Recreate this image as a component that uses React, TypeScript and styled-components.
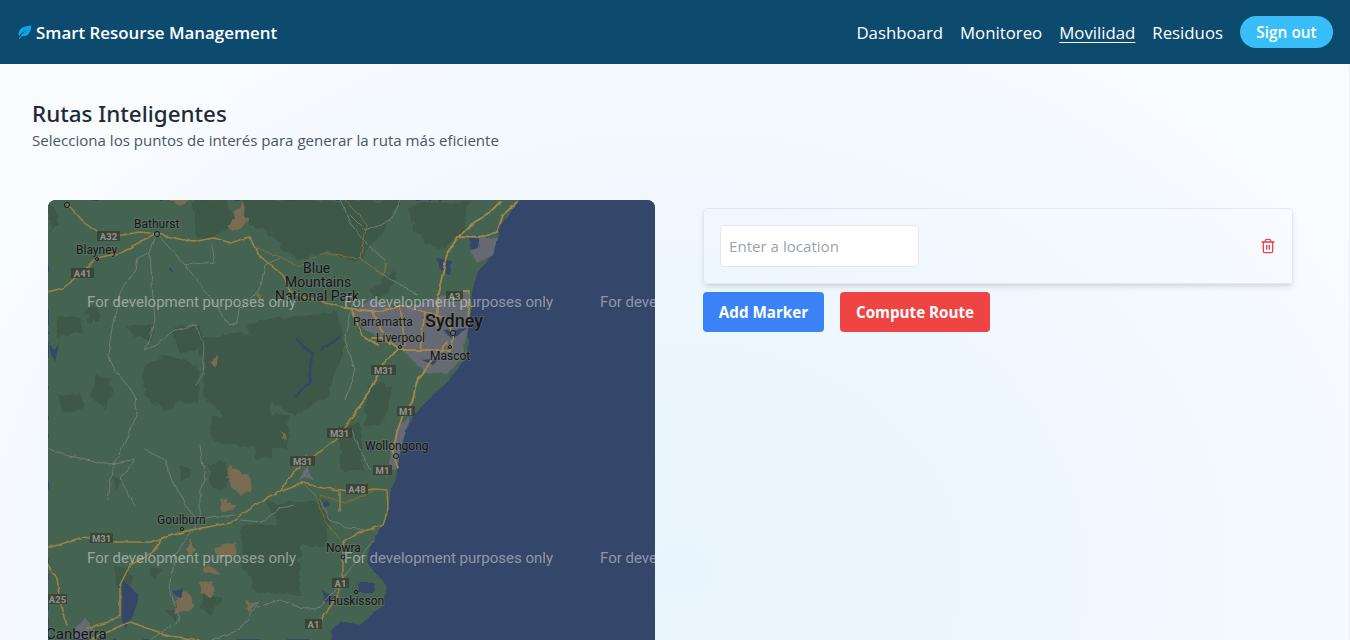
import React from "react";
import styled, { createGlobalStyle } from "styled-components";
import { Trash2 } from "lucide-react";

const Global = createGlobalStyle`
  html, body { margin: 0; padding: 0; height: 100%; overflow: hidden; }
  body { font-family: "Open Sans", "Noto Sans", sans-serif; }
`;

const Page = styled.div`
  height: 640px;
  overflow: hidden;
  background: radial-gradient(ellipse 800px 640px at 680px 570px, #e9f5fe 0%, #f0f7fe 55%, #f9fcff 100%);
`;
const Header = styled.header`
  height: 64px;
  background: #0c4a6e;
  display: flex;
  align-items: center;
  justify-content: space-between;
  padding: 0 17px 0 18px;
`;
const Brand = styled.div`
  display: flex;
  align-items: center;
  gap: 4px;
  color: #fff;
  font-size: 16.9px;
  font-weight: 600;
`;
const LeafIcon = styled.svg`
  width: 14px;
  height: 14px;
  fill: #0ea5e9;
  display: block;
`;
const Nav = styled.nav`
  display: flex;
  align-items: center;
  gap: 17px;
`;
const NavLink = styled.a<{ $active?: boolean }>`
  color: #fff;
  font-size: 16.8px;
  text-decoration: ${(p) => (p.$active ? "underline" : "none")};
  text-underline-offset: 3px;
`;
const SignOut = styled.button`
  height: 32px;
  width: 93px;
  border: 0;
  border-radius: 16px;
  background: #38bdf8;
  color: #fff;
  font: 600 15.4px "Open Sans", sans-serif;
`;
const Body = styled.div`
  height: 576px;
  box-sizing: border-box;
  border-right: 1px solid #eef1f5;
`;
const Intro = styled.section`
  padding: 34px 32px 0;
  height: 136px;
  box-sizing: border-box;
`;
const Title = styled.h1`
  margin: 0;
  font-family: "Noto Sans", sans-serif;
  font-size: 22.4px;
  line-height: 32px;
  font-weight: 500;
  color: #1f2937;
`;
const Subtitle = styled.p`
  margin: 0;
  font-size: 15.09px;
  line-height: 20px;
  color: #4b5563;
`;
const Content = styled.main`
  display: grid;
  grid-template-columns: 607px 590px;
  column-gap: 48px;
  padding: 0 48px;
`;
const MapFrame = styled.div`
  height: 460px;
  border-radius: 8px;
  overflow: hidden;
  background: #344669;
  svg { display: block; }
`;
const Side = styled.div`
  padding-top: 8px;
`;
const Card = styled.div`
  height: 76px;
  box-sizing: border-box;
  border: 1px solid #e5e7eb;
  border-radius: 4px;
  box-shadow: 0 4px 6px -1px rgba(0, 0, 0, 0.1), 0 2px 4px -2px rgba(0, 0, 0, 0.1);
  padding: 0 16px;
  display: flex;
  align-items: center;
  justify-content: space-between;
  svg { color: #ef4444; display: block; }
`;
const LocationInput = styled.input`
  width: 199px;
  height: 42px;
  box-sizing: border-box;
  border: 1px solid #e5e7eb;
  border-radius: 4px;
  background: #fff;
  padding: 0 8px;
  font: 400 15.1px "Open Sans", sans-serif;
  &::placeholder { color: #9ca3af; opacity: 1; }
`;
const Actions = styled.div`
  display: flex;
  gap: 16px;
  margin-top: 8px;
`;
const Action = styled.button<{ $bg: string; $w: number }>`
  height: 40px;
  width: ${(p) => p.$w}px;
  border: 0;
  border-radius: 4px;
  background: ${(p) => p.$bg};
  color: #fff;
  font: 700 15.2px "Open Sans", sans-serif;
`;

const land = "48,200 520,200 503,222 497,238 493,255 477,273 473,292 472,308 467,328 468,342 467,358 447,382 417,412 415,415 400,438 398,468 390,495 388,515 373,542 367,562 387,585 383,605 360,625 340,622 332,640 48,640";
const forest = [
  "190,200 227,200 232,225 215,238 195,235", "240,200 400,200 385,230 357,262 325,250 298,262 275,240 250,225",
  "55,318 80,316 82,335 60,338", "127,325 153,325 153,338 130,338", "85,312 98,308 100,322 88,322",
  "143,362 175,355 200,372 198,402 165,408 145,395", "170,330 200,325 205,350 180,352",
  "200,338 250,335 273,370 270,415 225,418 205,395", "250,322 338,312 345,345 330,395 295,415 255,395",
  "407,205 470,200 462,232 440,250 415,235", "370,290 395,268 392,285 375,300",
  "207,415 290,415 288,448 240,448 212,440", "210,462 227,462 227,488 210,488", "253,445 273,445 273,458 253,458",
  "240,528 300,520 300,595 262,595 243,570", "267,502 327,502 327,548 285,548", "340,425 362,425 362,470 338,470",
  "112,475 122,478 118,490", "180,465 192,470 180,480", "118,565 135,575 125,590 112,582",
  "205,590 222,600 212,615 200,610", "148,565 162,570 155,582", "165,612 178,610 176,622",
  "48,205 60,215 50,235", "365,385 392,385 385,420 365,425",
  "60,395 80,390 82,410 62,412", "95,370 112,380 105,410 92,395",
];
const tan = [
  "230,465 247,478 250,488 243,497 230,488 227,475", "222,498 235,502 230,510 223,510", "187,538 197,550 190,558",
  "217,550 233,542 232,556 220,558", "204,566 220,570 213,575 207,572", "200,582 215,587 212,597 202,595",
  "173,602 190,590 194,605 177,615", "243,600 258,606 248,612", "278,433 287,442 280,440",
  "227,225 240,202 250,222 233,232", "260,292 264,298 257,296", "210,360 220,358 216,368", "170,200 190,200 183,208",
];
const urban = [
  "353,312 370,300 400,308 440,297 470,292 470,322 464,345 463,358 447,374 425,372 405,352 365,330",
  "470,252 480,238 497,238 493,255 477,262", "400,425 410,415 402,445 396,470 388,470 392,445",
  "75,628 85,618 95,630 85,640 72,640", "300,478 306,468 314,480",
];
const blue = [
  "122,580 140,595 133,615 127,628 122,622", "173,592 183,588 180,598", "48,345 55,350 60,342 55,362 50,355",
  "437,258 452,262 450,275 440,270", "443,330 467,328 453,340", "423,360 440,358 433,365", "470,238 480,236 478,248 472,250",
  "330,630 345,622 360,625 360,640 332,640", "322,590 335,598 325,603", "325,500 330,505 322,508", "370,440 372,452 367,448",
  "360,583 375,583 373,592 358,592",
];
const streaks = ["297,338 304,348 313,352 310,368 310,382 295,397", "320,350 340,338", "170,268 173,272"];
const roads = [
  "67,205 83,222 97,232 110,237 140,232 157,234 193,242 213,238 230,243 250,237 257,253 270,265 283,275 290,292 323,302 345,308",
  "48,292 63,288 80,275 97,258 120,253 140,242 157,234",
  "353,415 337,438 313,458 293,472 280,492 260,502 230,523 207,527 190,530 163,538 150,542 113,542 83,537 48,548",
  "150,555 130,565 120,585 120,615 107,622 87,628", "190,530 163,538 150,555", "48,565 57,578 60,605 67,625",
  "303,483 280,492", "303,483 323,488 360,492 373,489 387,490 388,508 383,525 360,532 343,543 343,582 333,602 317,628",
  "340,492 340,510", "90,640 130,622 170,636 200,640",
];
const bigRoads = [
  "437,298 447,255 457,238 473,223 487,215 500,202", "457,237 480,238 497,232 503,215 517,202",
  "345,308 380,312 400,305 425,312 447,320 453,335 450,350 427,350 400,350 385,338 372,338",
  "400,347 383,365 367,395 353,415", "447,342 433,358 417,382 412,402 403,415 397,432 393,452 398,468",
  "372,312 390,345", "400,305 405,345", "425,312 420,350", "437,298 437,325", "460,292 470,292 468,325", "352,310 362,335 378,345",
];
const thin = [
  "157,234 150,252 138,258 136,270 120,292 112,328 108,355", "150,252 152,285 155,320 150,340 145,350 157,345 175,330 195,325 205,345 203,375 195,385",
  "157,234 185,265 205,290 215,305 230,325 238,322 240,310 260,290 265,265 280,258", "185,265 215,262 212,245",
  "108,355 115,370 135,395 137,415 112,470 108,500", "48,448 65,455 90,460 110,465 135,460 120,478 135,505", "145,450 165,460 172,480 190,512 200,520 200,490 205,480 200,445",
  "195,526 175,555 170,590 180,620 150,640", "200,520 210,518 235,515", "240,520 262,522 280,508 295,505",
  "257,607 280,600 300,607 315,610 335,590 345,575 375,540", "210,640 240,630 260,600", "300,480 308,470 305,455",
  "340,200 352,225 368,245 387,262 383,275 360,258", "400,200 390,220 365,230 350,215", "383,275 417,295", "353,302 345,340 355,370 345,400", "352,430 360,450 370,470",
  "320,500 330,520 345,528 375,530",
];
const brown = [
  "257,248 283,258 298,267 323,253 347,257 360,258 367,225 345,200", "360,258 383,275 385,262", "303,483 315,495 325,520 340,540",
  "320,495 345,503 376,490",
];

const Shield = ({ x, y, w, t }: { x: number; y: number; w: number; t: string }) => (
  <g>
    <rect x={x} y={y} width={w} height={10} fill="#3c4436" />
    <text x={x + w / 2} y={y + 8.5} textAnchor="middle" fontFamily="Roboto, sans-serif" fontWeight={700} fontSize={9.5} fill="#8f9490">{t}</text>
  </g>
);
const Place = ({ x, y, t, s = 12, w = 400 }: { x: number; y: number; t: string; s?: number; w?: number }) => (
  <text x={x} y={y} fontFamily="Roboto, sans-serif" fontSize={s} fontWeight={w} fill="#161616" stroke="#7b8580" strokeOpacity={0.35} strokeWidth={2} paintOrder="stroke">{t}</text>
);
const Dot = ({ x, y, r = 2.5 }: { x: number; y: number; r?: number }) => (
  <circle cx={x} cy={y} r={r} fill="#6b7270" stroke="#151515" strokeWidth={1} />
);

const RoadMap = () => (
  <svg width={607} height={460} viewBox="48 200 607 460">
    <defs>
      <filter id="rough" filterUnits="userSpaceOnUse" x="0" y="150" width="700" height="550">
        <feTurbulence type="fractalNoise" baseFrequency="0.07" numOctaves="3" seed="4" />
        <feDisplacementMap in="SourceGraphic" scale="12" xChannelSelector="R" yChannelSelector="G" />
        <feGaussianBlur stdDeviation="0.4" />
      </filter>
      <filter id="wavy" filterUnits="userSpaceOnUse" x="0" y="150" width="700" height="550">
        <feTurbulence type="fractalNoise" baseFrequency="0.09" numOctaves="2" seed="9" />
        <feDisplacementMap in="SourceGraphic" scale="4" xChannelSelector="R" yChannelSelector="G" />
      </filter>
    </defs>
    <rect x={48} y={200} width={607} height={460} fill="#344669" />
    <polygon points={land} fill="#456351" filter="url(#wavy)" />
    <g filter="url(#rough)">
      {forest.map((p) => <polygon key={p} points={p} fill="#3d5947" />)}
      {tan.map((p) => <polygon key={p} points={p} fill="#7a6c52" />)}
    </g>
    <g filter="url(#wavy)">
      {urban.map((p) => <polygon key={p} points={p} fill="#666b73" />)}
      {blue.map((p) => <polygon key={p} points={p} fill="#344669" />)}
      {streaks.map((p) => <polyline key={p} points={p} fill="none" stroke="#344669" strokeWidth={2.5} />)}
    </g>
    <g fill="none" strokeLinejoin="round" strokeLinecap="round" filter="url(#wavy)">
      {thin.map((p) => <polyline key={p} points={p} stroke="#6f7c76" strokeWidth={1} />)}
      {brown.map((p) => <polyline key={p} points={p} stroke="#7d6f3f" strokeWidth={1} />)}
      {roads.map((p) => <polyline key={p} points={p} stroke="#9f8240" strokeWidth={1.5} />)}
      {bigRoads.map((p) => <polyline key={p} points={p} stroke="#a58747" strokeWidth={1.8} />)}
    </g>
    <Shield x={97} y={231} w={23} t="A32" />
    <Shield x={71} y={268} w={23} t="A41" />
    <Shield x={446} y={291} w={17} t="A3" />
    <Shield x={371} y={365} w={25} t="M31" />
    <Shield x={397} y={406} w={18} t="M1" />
    <Shield x={327} y={428} w={25} t="M31" />
    <Shield x={290} y={456} w={25} t="M31" />
    <Shield x={346} y={484} w={22} t="A48" />
    <Shield x={373} y={465} w={19} t="M1" />
    <Shield x={90} y={533} w={23} t="M31" />
    <Shield x={48} y={594} w={19} t="A25" />
    <Shield x={332} y={578} w={17} t="A1" />
    <Shield x={305} y={619} w={17} t="A1" />
    <Dot x={157} y={234} />
    <Dot x={67} y={205} />
    <Dot x={97} y={259} r={1.5} />
    <Dot x={453} y={333} />
    <Dot x={400} y={347} r={1.5} />
    <Dot x={450} y={347} r={1.5} />
    <Dot x={396} y={456} />
    <Dot x={182} y={529} r={1.5} />
    <Dot x={343} y={557} r={2} />
    <Dot x={356} y={592} r={1.5} />
    <Place x={134} y={228} t="Bathurst" />
    <Place x={76} y={254} t="Blayney" />
    <Place x={303} y={273} t="Blue" s={14} />
    <Place x={285} y={287} t="Mountains" s={14} />
    <Place x={275} y={301} t="National Park" s={14} />
    <Place x={353} y={326} t="Parramatta" />
    <Place x={425} y={327} t="Sydney" s={18} w={500} />
    <Place x={376} y={342} t="Liverpool" />
    <Place x={430} y={360} t="Mascot" />
    <Place x={365} y={450} t="Wollongong" />
    <Place x={157} y={524} t="Goulburn" />
    <Place x={326} y={552} t="Nowra" />
    <Place x={328} y={605} t="Huskisson" />
    <Place x={46} y={639} t="Canberra" s={15} />
    {[307, 563].flatMap((y) => [87, 344, 600].map((x) => (
      <text key={`${x}-${y}`} x={x} y={y} fontFamily="Roboto, sans-serif" fontSize={15} fill="#fff" fillOpacity={0.45}>For development purposes only</text>
    )))}
  </svg>
);

export default function App() {
  return (
    <Page>
      <Global />
      <Header>
        <Brand>
          <LeafIcon viewBox="0 0 14 14">
            <path d="M13.5 0.5C9 1.5 4 1 1.5 5.5C0.5 7.5 0.5 10 1 11C3 8 6 6 9 5C6 7 2.5 10 0.7 14L2 14C2.5 12.5 3.3 11.5 4 11C9 12 12.5 9 13.5 0.5Z" />
          </LeafIcon>
          Smart Resourse Management
        </Brand>
        <Nav>
          <NavLink>Dashboard</NavLink>
          <NavLink>Monitoreo</NavLink>
          <NavLink $active>Movilidad</NavLink>
          <NavLink>Residuos</NavLink>
          <SignOut>Sign out</SignOut>
        </Nav>
      </Header>
      <Body>
        <Intro>
          <Title>Rutas Inteligentes</Title>
          <Subtitle>Selecciona los puntos de interés para generar la ruta más eficiente</Subtitle>
        </Intro>
        <Content>
          <MapFrame><RoadMap /></MapFrame>
          <Side>
            <Card>
              <LocationInput placeholder="Enter a location" />
              <Trash2 size={16} strokeWidth={2} />
            </Card>
            <Actions>
              <Action $bg="#3b82f6" $w={121}>Add Marker</Action>
              <Action $bg="#ef4444" $w={150}>Compute Route</Action>
            </Actions>
          </Side>
        </Content>
      </Body>
    </Page>
  );
}
